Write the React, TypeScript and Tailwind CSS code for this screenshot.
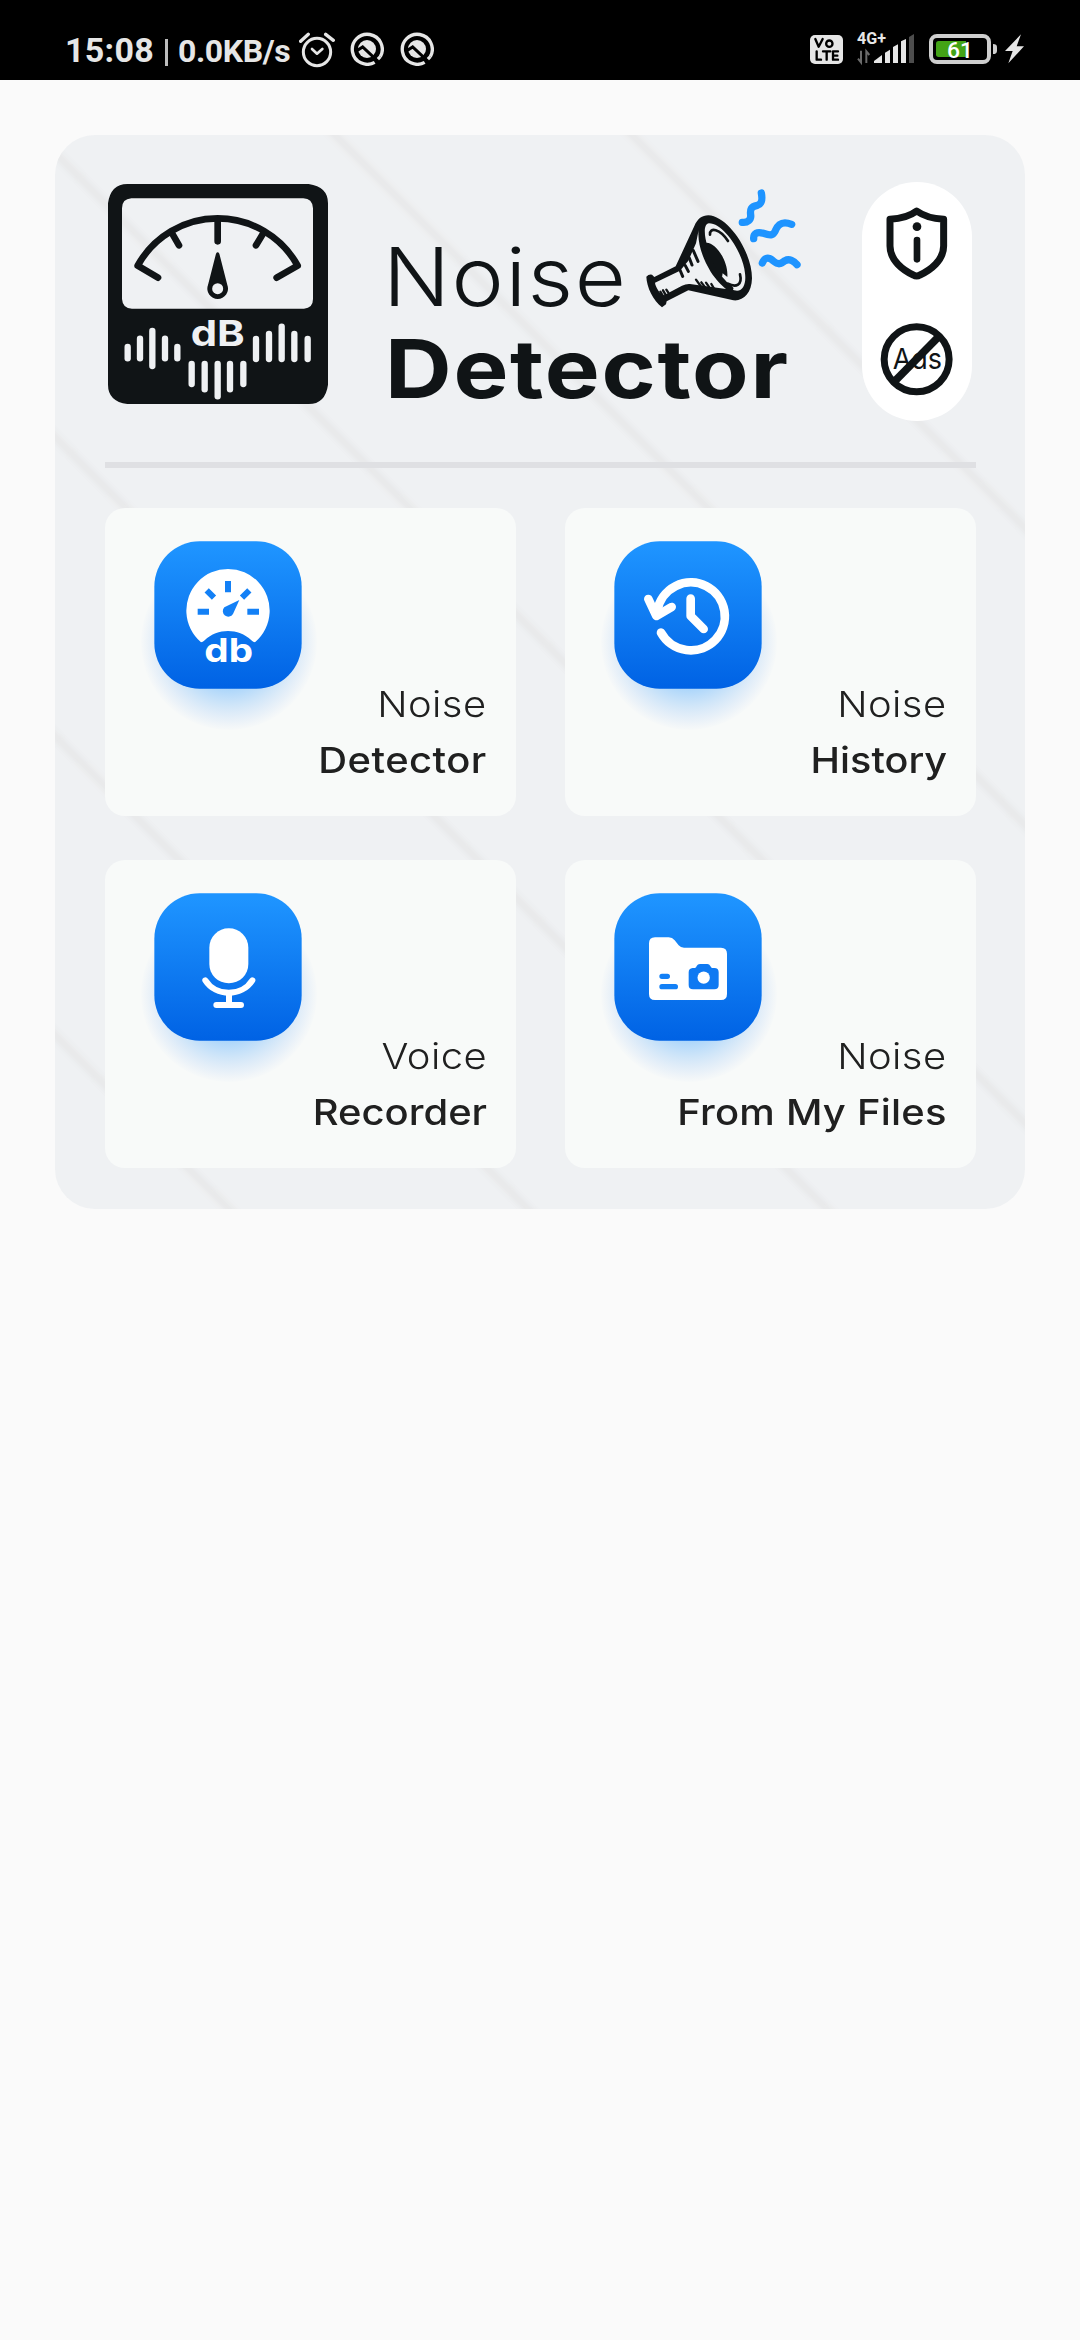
import type { ReactNode } from 'react';

const INK = '#101416';
const BLUE = '#1380f6';

function StatusBar() {
  return (
    <div className="flex h-20 items-start bg-black pl-[65px] font-['Roboto',sans-serif] font-bold text-[#e6e6e6]">
      <span className="mt-[30px] w-[88px] text-[34px] leading-10 tracking-[0.3px]">15:08</span>
      <span className="mt-[39px] ml-3 h-[27px] w-[3px] bg-[#bdbdbd]" />
      <span className="mt-[31px] ml-[10px] w-[112px] text-[32px] leading-10 tracking-[-0.4px]">0.0KB/s</span>
      <svg className="mt-[32px] ml-[9px] h-9 w-9" viewBox="777 96 108 108" fill="none" stroke="#e6e6e6" strokeLinecap="round">
        <circle cx="831" cy="156" r="41" strokeWidth="9" />
        <path d="M782 124 L805 103 M880 121 L857 103" strokeWidth="10" />
        <path d="M816 147 L831 161 L847 147" strokeWidth="8" strokeLinejoin="round" />
      </svg>
      <SearchBadge className="mt-8 ml-[15px] h-[34px] w-[34px]" />
      <SearchBadge className="mt-8 ml-4 h-[34px] w-[34px]" />
      <svg className="mt-[35px] ml-auto h-[29px] w-[33px]" viewBox="0 0 99 87">
        <rect width="99" height="87" rx="15" fill="#e6e6e6" />
        <g fill="none" stroke="#000" strokeWidth="7" strokeLinecap="round" strokeLinejoin="round">
          <path d="M16 12 L26 35 L38 12" />
          <circle cx="58" cy="26" r="9.5" />
          <path d="M20 49 V74 H33 M39 49 H61 M50 49 V74 M84 49 H69 V74 H84 M69 62 H82" />
        </g>
      </svg>
      <svg className="mt-[28px] ml-[12px] h-[37px] w-[62px] overflow-visible" viewBox="222 84 186 111">
        <text x="228" y="132" fontFamily="Roboto, sans-serif" fontWeight="700" fontSize="48" fill="#e6e6e6" textLength="87" lengthAdjust="spacingAndGlyphs">4G+</text>
        <path d="M240 152 V187 L231 176 M256 189 V154 L265 165" fill="none" stroke="#6b6b6b" strokeWidth="6" />
        <g fill="#e6e6e6">
          <path d="M279 189 V183 L303 165 V189 Z" />
          <path d="M312 189 V158 L327 149 V189 Z" />
          <path d="M336 189 V141 L351 133 V189 Z" />
          <path d="M360 189 V124 L375 117 V189 Z" />
        </g>
        <path d="M384 189 V111 L399 102 V189 Z" fill="#4d4d4d" />
      </svg>
      <svg className="mt-[33px] ml-[11px] mr-[55px] h-8 w-[97px]" viewBox="444 99 291 96">
        <rect x="453" y="108" width="174" height="78" rx="18" fill="none" stroke="#cfcfcf" strokeWidth="12" />
        <path d="M476 123 H558 V171 H476 Q468 171 468 163 V131 Q468 123 476 123 Z" fill="#43a316" />
        <text x="501" y="173" fontFamily="Roboto, sans-serif" fontWeight="500" fontSize="68" fill="#fff" textLength="78" lengthAdjust="spacingAndGlyphs">61</text>
        <path d="M639 132 Q651 132 651 142 V152 Q651 162 639 162 Z" fill="#cfcfcf" />
        <path d="M723 103 L675 153 H698 L685 190 L732 139 H710 Z" fill="#e6e6e6" />
      </svg>
    </div>
  );
}

function SearchBadge({ className }: { className: string }) {
  return (
    <svg className={className} viewBox="0 0 102 102">
      <path d="M73 91 A45 45 0 1 1 90 74" transform="translate(1 0)" fill="none" stroke="#e6e6e6" strokeWidth="10" />
      <path d="M82 82 L90 74" transform="translate(1 0)" stroke="#e6e6e6" strokeWidth="10" />
      <circle cx="51" cy="51" r="27" fill="#e6e6e6" />
      <path d="M18 58 L38 45 L84 88" fill="none" stroke="#000" strokeWidth="9" />
    </svg>
  );
}

function MeterLogo() {
  const bars: [number, number, number][] = [
    [113, 546, 580], [150, 521, 580], [187, 498, 603], [225, 521, 580], [262, 546, 580],
    [305, 597, 657], [344, 597, 673], [383, 597, 694], [420, 597, 673], [460, 597, 657],
    [498, 522, 582], [537, 507, 582], [575, 485, 582], [613, 507, 582], [653, 522, 582],
  ];
  return (
    <svg className="mt-[2px] ml-[3px] h-[220px] w-[220px] shrink-0" viewBox="54 57 660 660">
      <path
        fill={INK}
        fillRule="evenodd"
        d="M112 57 H656 Q714 65 714 115 V659 Q706 717 656 717 H112 Q54 709 54 659 V115 Q62 57 112 57 Z M124 100 Q96 102 96 130 V402 Q98 431 126 431 H642 Q669 429 669 402 V130 Q667 100 640 100 Z"
      />
      <g fill="none" stroke={INK} strokeWidth="20" strokeLinecap="round" strokeLinejoin="round">
        <path d="M204 338 L143 302 A274 274 0 0 1 623 302 L560 338" />
        <path d="M383 168 V229 M248 208 L267 241 M518 208 L498 241" />
      </g>
      <path d="M378 266 Q383 258 388 266 L412 360 A31 31 0 1 1 354 360 Z" fill={INK} />
      <circle cx="383" cy="371" r="16.5" fill="#eff1f3" />
      <text x="302" y="542" fontFamily="Inter, sans-serif" fontWeight="700" fontSize="106" fill="#eff1f3" textLength="162" lengthAdjust="spacingAndGlyphs">dB</text>
      {bars.map(([x, a, b]) => (
        <path key={x} d={`M${x} ${a} V${b}`} stroke="#eff1f3" strokeWidth="19" strokeLinecap="round" />
      ))}
    </svg>
  );
}

function Megaphone() {
  return (
    <svg className="ml-[25px] h-[140px] w-[170px] shrink-0" viewBox="840 39 510 420">
      <path
        fill={INK}
        d="M1045 136 C1104 138 1176 245 1176 325 C1175 370 1150 394 1120 391 L985 361 L920 394 L918 403 L906 412 C880 392 860 352 859 320 Q866 312 876 314 L883 321 L947 289 L1003 168 C1013 146 1026 136 1045 136 Z"
      />
      <path
        fill="#eff1f3"
        d="M1016 180 C1012 215 1024 258 1052 305 C1068 330 1084 344 1098 357 L990 342 Q978 341 966 347 L912 376 C900 374 886 350 885 338 L960 302 L985 272 L1008 220 Z"
      />
      <path
        fill="#eff1f3"
        d="M1047 160 C1030 162 1032 195 1042 228 C1058 290 1084 335 1113 356 C1145 375 1160 345 1155 310 C1150 250 1092 160 1047 160 Z"
      />
      <path fill={INK} d="M1034 219 C1062 210 1106 270 1102 321 L1088 310 L1086 322 C1062 300 1040 260 1034 219 Z" />
      <g fill="none" stroke={INK} strokeLinecap="round">
        <path d="M1024 178 C1024 245 1064 320 1112 356" strokeWidth="16" />
        <path d="M1050 194 C1048 170 1080 176 1104 213" strokeWidth="8" />
        <path d="M1140 313 C1148 345 1128 354 1104 341" strokeWidth="8" />
        <path d="M1000 242 L1014 274 M988 264 L996 285 M976 287 L985 304 M960 300 L968 319" strokeWidth="9" />
        <path d="M1008 329 L1024 351 M1024 337 L1036 353 M1038 338 L1050 355 M1054 342 L1062 356" strokeWidth="7" />
        <path d="M901 365 L908 377 M909 361 L916 373 M919 359 L925 368" strokeWidth="7" />
      </g>
      <g fill="none" stroke="#1e94ff" strokeWidth="22" strokeLinecap="round">
        <path d="M1204 69 C1208 90 1206 101 1192 106 C1172 110 1170 118 1172 135 C1174 150 1162 159 1147 157" />
        <path d="M1181 206 C1180 190 1192 184 1210 190 C1234 198 1240 195 1246 182 C1256 158 1272 154 1295 163" />
        <path d="M1207 279 C1213 263 1226 259 1240 273 C1255 285 1262 283 1275 272 C1288 265 1302 273 1311 284" />
      </g>
    </svg>
  );
}

function Tile({ y = 0, children }: { y?: number; children: ReactNode }) {
  return (
    <svg className="absolute top-8 left-[35px] h-[191.67px] w-[180px]" viewBox="30 60 540 575">
      <defs>
        <linearGradient id="tileFill" x1="0" y1="0" x2="0" y2="1">
          <stop offset="0.04" stopColor="#1e94ff" />
          <stop offset="1" stopColor="#0062e4" />
        </linearGradient>
        <radialGradient id="tileGlow">
          <stop offset="0.5" stopColor="#1e94ff" stopOpacity="0.38" />
          <stop offset="0.72" stopColor="#3e9cf8" stopOpacity="0.22" />
          <stop offset="0.9" stopColor="#5a9cf4" stopOpacity="0.09" />
          <stop offset="1" stopColor="#6f9cf0" stopOpacity="0.01" />
        </radialGradient>
      </defs>
      <circle cx="297" cy="366" r="264" fill="url(#tileGlow)" />
      <rect x="73" y="64" width="442" height="442" rx="136" fill="url(#tileFill)" />
      <g transform={`translate(0 ${y})`}>{children}</g>
    </svg>
  );
}

function DbIcon() {
  return (
    <Tile>
      <path d="M213 367 A125 125 0 1 1 375 367 Q370 367 364 361 C325 324 263 324 224 361 Q218 367 213 367 Z" fill="#fff" />
      <path d="M294 183 V217 M203 275 H237 M352 275 H387 M230 211 L252 233 M358 211 L336 233" stroke={BLUE} strokeWidth="18" />
      <path d="M328 240 L283 262 A16.5 16.5 0 1 0 309 282 Z" fill={BLUE} />
      <text x="223" y="425" fontFamily="Inter, sans-serif" fontWeight="700" fontSize="100" fill="#fff" textLength="146" lengthAdjust="spacingAndGlyphs">db</text>
    </Tile>
  );
}

function HistoryIcon() {
  return (
    <Tile>
      <g fill="none" stroke="#fff" strokeWidth="26" strokeLinecap="round" strokeLinejoin="round">
        <path d="M213 338 A102 102 0 1 0 202 272" />
        <path d="M175 237 L199 288 L245 261" />
        <path d="M302 236 V288 L341 327" />
      </g>
    </Tile>
  );
}

function MicIcon() {
  return (
    <Tile y={-5}>
      <rect x="238" y="174" width="117" height="165" rx="58" fill="#fff" />
      <g fill="none" stroke="#fff" strokeWidth="18" strokeLinecap="round">
        <path d="M226 330 C258 380 335 380 367 330" />
        <path d="M297 368 V402 M259 404 H333" />
      </g>
    </Tile>
  );
}

function FolderIcon() {
  return (
    <Tile y={-6}>
      <path
        fill="#fff"
        d="M177 220 Q177 202 195 202 H236 Q247 202 254 211 L266 226 Q272 233 282 233 H393 Q411 233 411 251 V372 Q411 390 393 390 H195 Q177 390 177 372 Z"
      />
      <path d="M216 319 H232 M216 350 H256" stroke={BLUE} strokeWidth="16" strokeLinecap="round" />
      <path
        fill="#0e79f2"
        d="M296 307 Q296 295 308 294 H315 Q319 293 320 288 Q323 282 330 282 H352 Q358 282 361 288 Q363 293 366 294 H373 Q386 294 386 307 V345 Q386 358 373 358 H309 Q296 358 296 345 Z"
      />
      <circle cx="341" cy="323" r="18.5" fill="#fff" />
    </Tile>
  );
}

function Card({ icon, top, children }: { icon: ReactNode; top: string; children: ReactNode }) {
  return (
    <button className="relative flex flex-col items-end justify-end rounded-[20px] bg-[#f8faf9] pr-[29px] pb-7 text-[36px] leading-[56px] text-[#202020]">
      {icon}
      <span className="relative origin-right scale-x-[1.11] font-light tracking-[0.4px]">{top}</span>
      {children}
    </button>
  );
}

function Stripes() {
  return (
    <svg className="absolute inset-0 h-full w-full" viewBox="0 0 970 1074">
      <g stroke="#e8e9ea" strokeWidth="9" className="blur-[2px]">
        {[577, 280, -18, -302, -601, -900].map((c) => (
          <path key={c} d={`M${c - 20} -20 L${c + 1120} 1120`} />
        ))}
      </g>
    </svg>
  );
}

export default function App() {
  return (
    <div className="min-h-[2340px] w-[1080px] bg-[#fafafa] font-['Inter',sans-serif]">
      <StatusBar />
      <main className="relative mx-[55px] mt-[55px] h-[1074px] overflow-hidden rounded-[40px] bg-[#eff1f3] pt-[47px] pr-[49px] pl-[50px]">
        <Stripes />
        <header className="relative flex h-[239px] items-start text-[#101416]">
          <MeterLogo />
          <h1 className="mt-[1px] ml-[55px] text-[81px] leading-[92px]">
            <span className="flex items-end">
              <span className="w-[232px] origin-left scale-x-[1.09] font-light tracking-[1.4px]">Noise</span>
              <Megaphone />
            </span>
            <span className="ml-[2px] block origin-left scale-x-[1.14] font-bold tracking-[1.5px]">Detector</span>
          </h1>
          <div className="mr-1 ml-auto flex h-[239px] w-[110px] flex-col items-center rounded-full bg-white pt-[23px]">
            <svg className="h-[78.3px] w-[73.3px]" viewBox="122 120 220 235">
              <path
                d="M232 138 C215 151 185 161 152 163 V243 C152 287 192 316 222 330 Q232 336 242 330 C272 316 313 287 313 243 V163 C280 161 250 151 232 138 Z"
                fill="none"
                stroke={INK}
                strokeWidth="21"
                strokeLinejoin="round"
              />
              <circle cx="233" cy="185" r="13" fill={INK} />
              <path d="M233 225 V283" stroke={INK} strokeWidth="20" strokeLinecap="round" />
            </svg>
            <svg className="mt-[38.4px] h-[75px] w-[73.3px]" viewBox="122 470 220 225">
              <text x="160" y="612" fontFamily="Inter, sans-serif" fontSize="85" fill={INK} textLength="148" lengthAdjust="spacingAndGlyphs">Ads</text>
              <circle cx="232" cy="582" r="97.5" fill="none" stroke={INK} strokeWidth="21" />
              <path d="M300 512 L164 650" stroke={INK} strokeWidth="23" />
            </svg>
          </div>
        </header>
        <div className="relative mt-[41px] h-[6px] bg-[#dfe0e3]" />
        <div className="relative mt-10 grid grid-cols-[411px_411px] grid-rows-[308px_308px] justify-between gap-y-11">
          <Card icon={<DbIcon />} top="Noise">
            <span className="relative origin-right scale-x-[1.11] font-medium tracking-[0.4px]">Detector</span>
          </Card>
          <Card icon={<HistoryIcon />} top="Noise">
            <span className="relative origin-right scale-x-[1.1] font-medium">History</span>
          </Card>
          <Card icon={<MicIcon />} top="Voice">
            <span className="relative origin-right scale-x-[1.11] font-medium">Recorder</span>
          </Card>
          <Card icon={<FolderIcon />} top="Noise">
            <span className="relative origin-right scale-x-[1.11] font-medium tracking-[0.2px]">From My Files</span>
          </Card>
        </div>
      </main>
    </div>
  );
}
